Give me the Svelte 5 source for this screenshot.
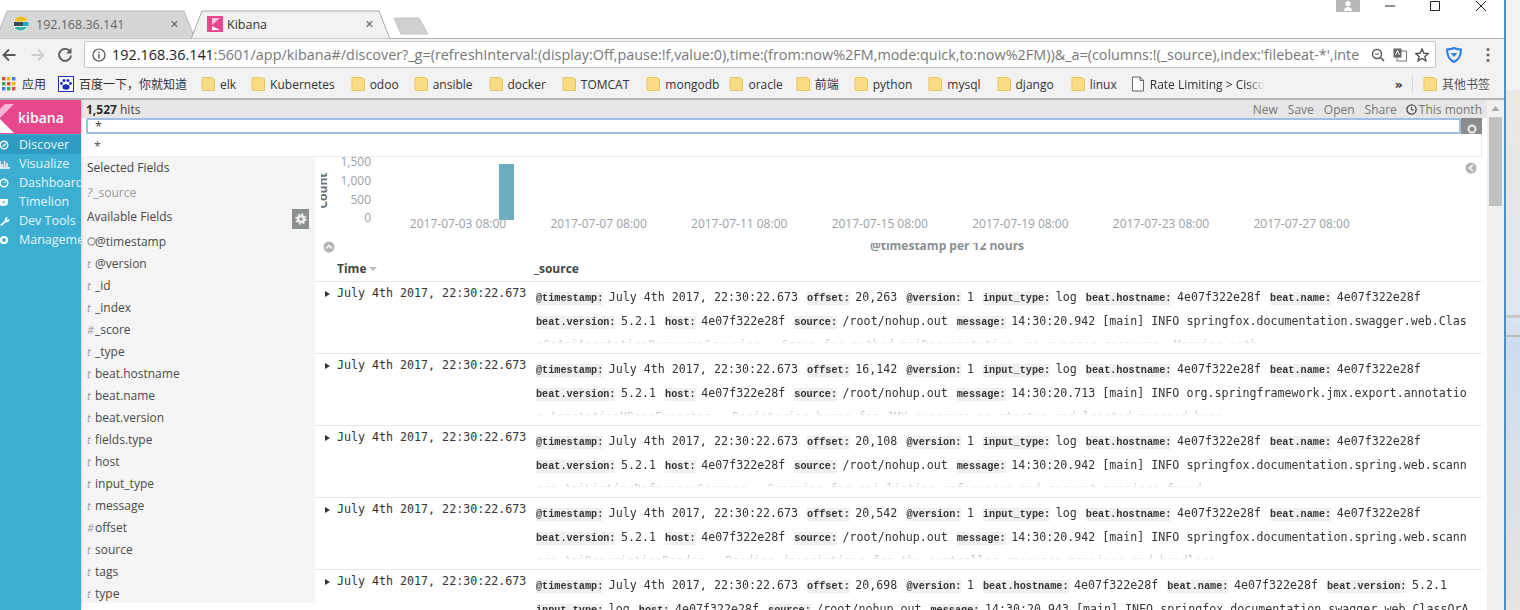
<script>
  const bookmarks = [
    { name: "elk", gap: 15 },
    { name: "Kubernetes", gap: 16 },
    { name: "odoo", gap: 15 },
    { name: "ansible", gap: 16 },
    { name: "docker", gap: 16 },
    { name: "TOMCAT", gap: 17 },
    { name: "mongodb", gap: 10 },
    { name: "oracle", gap: 13 },
    { name: "前端", gap: 15 },
    { name: "python", gap: 16 },
    { name: "mysql", gap: 16 },
    { name: "django", gap: 17 },
    { name: "linux", gap: 14 }
  ]

  const navItems = [
    { name: "Discover", active: true, icon: "compass" },
    { name: "Visualize", icon: "bars" },
    { name: "Dashboard", icon: "gauge" },
    { name: "Timelion", icon: "mask" },
    { name: "Dev Tools", icon: "wrench" },
    { name: "Management", icon: "gear" }
  ]

  const fields = [
    ["clock", "@timestamp"], ["t", "@version"], ["t", "_id"], ["t", "_index"],
    ["#", "_score"], ["t", "_type"], ["t", "beat.hostname"], ["t", "beat.name"],
    ["t", "beat.version"], ["t", "fields.type"], ["t", "host"], ["t", "input_type"],
    ["t", "message"], ["#", "offset"], ["t", "source"], ["t", "tags"], ["t", "type"]
  ]

  const ts = "July 4th 2017, 22:30:22.673"
  const host = "4e07f322e28f"
  const rows = [
    { offset: "20,263", msg: "14:30:20.942 [main] INFO springfox.documentation.swagger.web.ClassOrApiAnnotationResourceGrouping - Group for method apiDocumentation was swagger resource, Mapping path" },
    { offset: "16,142", msg: "14:30:20.713 [main] INFO org.springframework.jmx.export.annotation.AnnotationMBeanExporter - Registering beans for JMX exposure on startup and located managed bean" },
    { offset: "20,108", msg: "14:30:20.942 [main] INFO springfox.documentation.spring.web.scanners.ApiListingReferenceScanner - Scanning for api listing references and request mappings found" },
    { offset: "20,542", msg: "14:30:20.942 [main] INFO springfox.documentation.spring.web.scanners.ApiDescriptionReader - Reading descriptions for the controller resource mappings and handlers" }
  ]
  const lastMsg = "14:30:20.943 [main] INFO springfox.documentation.swagger.web.ClassOrApiAnnotationResourceGrouping"

  const yTicks = [["1,500", 166], ["1,000", 185], ["500", 204], ["0", 222]]
  const xTicks = ["2017-07-03 08:00", "2017-07-07 08:00", "2017-07-11 08:00", "2017-07-15 08:00", "2017-07-19 08:00", "2017-07-23 08:00", "2017-07-27 08:00"]
</script>

<div class="screen">
  <div class="window">
    <div class="tabstrip">
      <div class="tab">
        <svg class="tab-bg" viewBox="0 0 205 29" preserveAspectRatio="none"><path d="M0 29 L11 1 L188 1 L199 29 Z" fill="#d6d6d6" stroke="#b9b9b9"/></svg>
        <svg class="favicon" viewBox="0 0 16 16">
          <circle cx="8" cy="8" r="7.500" fill="#f1f1f1"/>
          <path d="M2 3.500A7.500 7.500 0 0 1 14 3.500L14 5.500H2Z" fill="#f0bf1a"/>
          <path d="M1 6H15V10H1Z" fill="#3a4a5a"/>
          <path d="M2 11H14A7.500 7.500 0 0 1 2 12Z" fill="#30b5a8"/>
          <path d="M10 6H15.500V10H10Z" fill="#22a7d0"/>
        </svg>
        <span class="tab-title dim">192.168.36.141</span>
        <span class="tab-x">✕</span>
      </div>
      <div class="tab active">
        <svg class="tab-bg" viewBox="0 0 205 29" preserveAspectRatio="none"><path d="M0 29 L11 1 L188 1 L199 29 Z" fill="#f2f2f2" stroke="#a9a9a9"/></svg>
        <svg class="favicon" viewBox="0 0 16 16">
          <rect width="16" height="16" fill="#e8488b"/>
          <path d="M5 2H13L5 9Z" fill="#f9c5dc"/>
          <path d="M5 10L13 14H5Z" fill="#fff"/>
        </svg>
        <span class="tab-title">Kibana</span>
        <span class="tab-x">✕</span>
      </div>
      <svg class="newtab" viewBox="0 0 36 18"><path d="M1 1H26L35 17H8Z" fill="#d0d0d0" stroke="#c4c4c4"/></svg>
      <div class="spring"></div>
      <div class="winbtns">
        <span class="profile"><svg viewBox="0 0 24 12"><path d="M8 11C8 8 10 7 12 7S16 8 16 11Z M12 1a2.600 2.600 0 1 1 0 5.200a2.600 2.600 0 1 1 0-5.200Z" fill="#fff"/></svg></span>
        <svg class="winbtn w-min" viewBox="0 0 10 10"><path d="M0 5H10" stroke="#222"/></svg>
        <svg class="winbtn w-max" viewBox="0 0 10 10"><path d="M.5.5H9.500V9.500H.5Z" fill="none" stroke="#222"/></svg>
        <svg class="winbtn w-close" viewBox="0 0 10 10"><path d="M0 0L10 10M10 0L0 10" stroke="#222"/></svg>
      </div>
    </div>

    <div class="toolbar">
      <svg class="tool" viewBox="0 0 16 16"><path d="M14.500 8H2.500M8 2.500L2.500 8L8 13.500" fill="none" stroke="#5a5a5a" stroke-width="1.800"/></svg>
      <svg class="tool fwd" viewBox="0 0 16 16"><path d="M1.500 8H13.500M8 2.500L13.500 8L8 13.500" fill="none" stroke="#cfcfcf" stroke-width="1.800"/></svg>
      <svg class="tool reload" viewBox="0 0 16 16"><path d="M13.300 5A6 6 0 1 0 14 8.500" fill="none" stroke="#5a5a5a" stroke-width="1.900"/><path d="M14.500 1V6.500H9Z" fill="#5a5a5a"/></svg>
      <div class="omnibox">
        <svg class="info" viewBox="0 0 14 14"><circle cx="7" cy="7" r="6" fill="none" stroke="#555" stroke-width="1.200"/><path d="M7 6V10.500M7 3.500V5" stroke="#555" stroke-width="1.400"/></svg>
        <span class="url"><b>192.168.36.141</b>:5601/app/kibana#/discover?_g=(refreshInterval:(display:Off,pause:!f,value:0),time:(from:now%2FM,mode:quick,to:now%2FM))&amp;_a=(columns:!(_source),index:'filebeat-*',inte</span>
        <svg class="omni-ic" viewBox="0 0 14 14"><circle cx="6" cy="6" r="4.500" fill="none" stroke="#555" stroke-width="1.400"/><path d="M9.500 9.500L13 13" stroke="#555" stroke-width="1.600"/><path d="M4 6H8" stroke="#555"/></svg>
        <svg class="omni-ic" viewBox="0 0 14 14"><rect x="4" y="3" width="9.500" height="10" fill="#fff" stroke="#777"/><rect x=".5" y=".5" width="8" height="9" fill="#666"/><path d="M2.500 7L4.500 2.500L6.500 7" fill="none" stroke="#fff"/></svg>
        <svg class="omni-ic" viewBox="0 0 14 14"><path d="M7 1L8.800 5.100L13.300 5.500L9.900 8.400L10.900 12.800L7 10.500L3.100 12.800L4.100 8.400L.7 5.500L5.200 5.100Z" fill="none" stroke="#444" stroke-width="1.300"/></svg>
      </div>
      <svg class="shield" viewBox="0 0 16 16"><path d="M8 1C10 2 12 2.500 15 2.500C15 9 12 13 8 15C4 13 1 9 1 2.500C4 2.500 6 2 8 1Z" fill="none" stroke="#2f7fe8" stroke-width="2"/><path d="M4.500 6H11.500L8 10Z" fill="#2f7fe8"/></svg>
      <svg class="dots" viewBox="0 0 4 16"><circle cx="2" cy="2.500" r="1.600" fill="#666"/><circle cx="2" cy="8" r="1.600" fill="#666"/><circle cx="2" cy="13.500" r="1.600" fill="#666"/></svg>
    </div>

    <div class="bookmarks">
      <svg class="apps" viewBox="0 0 14 14">
        {#each [0, 5, 10] as y, j}
          {#each [0, 5, 10] as x, i}
            <rect x={x} y={y} width="3.400" height="3.400" fill={["#d9493b", "#f0b400", "#3b7de0", "#37a853", "#d9493b", "#f0b400", "#3b7de0", "#37a853", "#d9493b"][j * 3 + i]}/>
          {/each}
        {/each}
      </svg>
      <span class="bm-text apps-text">应用</span>
      <svg class="paw" viewBox="0 0 16 16"><rect x=".5" y=".5" width="15" height="15" fill="#fff" stroke="#1e2fb5"/><ellipse cx="8" cy="11" rx="3.600" ry="2.800" fill="#1e2fb5"/><circle cx="3.500" cy="7.500" r="1.400" fill="#1e2fb5"/><circle cx="12.500" cy="7.500" r="1.400" fill="#1e2fb5"/><circle cx="6" cy="4.500" r="1.500" fill="#1e2fb5"/><circle cx="10" cy="4.500" r="1.500" fill="#1e2fb5"/></svg>
      <span class="bm-text baidu">百度一下，你就知道</span>
      {#each bookmarks as b}
        <span class="bm" style="margin-right: {b.gap}px">
          <svg class="folder" viewBox="0 0 14 16"><path d="M1 1.500H10L13.500 3V14.500H1Z" fill="#fbdc83" stroke="#e8c465"/></svg>
          <span class="bm-text">{b.name}</span>
        </span>
      {/each}
      <span class="bm rate">
        <svg class="folder" viewBox="0 0 14 16"><path d="M1.500 1H9L12.500 4.500V15H1.500ZM9 1V4.500H12.500" fill="#fff" stroke="#666"/></svg>
        <span class="bm-text rate-text">Rate Limiting &gt; Cisco</span>
      </span>
      <span class="spring"></span>
      <span class="more">»</span>
      <span class="bm-sep"></span>
      <svg class="folder" viewBox="0 0 14 16"><path d="M1 1.500H10L13.500 3V14.500H1Z" fill="#fbdc83" stroke="#e8c465"/></svg>
      <span class="bm-text other">其他书签</span>
    </div>

    <div class="page">
      <nav class="nav">
        <div class="logo">
          <svg viewBox="0 0 16 34"><path d="M0 9L5 4H14L0 18Z" fill="#f6b6d1"/><path d="M0 19L14 33H0Z" fill="#fff"/></svg>
          <span>kibana</span>
        </div>
        {#each navItems as item}
          <div class="nav-item" class:active={item.active}>
            <svg viewBox="0 0 12 12">
              {#if item.icon === "compass"}
                <circle cx="4" cy="6" r="3.800" fill="none" stroke="#fff" stroke-width="1.400"/><path d="M2.500 7.500L6 4.500" stroke="#fff" stroke-width="1.400"/>
              {:else if item.icon === "bars"}
                <path d="M0 3V10H9V9M2 9V6M4.500 9V3M7 9V5" fill="none" stroke="#fff" stroke-width="1.500"/>
              {:else if item.icon === "gauge"}
                <circle cx="4" cy="6" r="3.800" fill="none" stroke="#fff" stroke-width="1.400"/><path d="M4 6L6 4.500" stroke="#fff"/>
              {:else if item.icon === "mask"}
                <path d="M-1 3H8V7C8 9 6 10 3.500 10S-1 9-1 7Z" fill="#fff"/><circle cx="3.500" cy="6" r="1" fill="#3caed2"/>
              {:else if item.icon === "wrench"}
                <path d="M0 10L5 5.500A2.600 2.600 0 0 1 8 2L6.500 3.700L8 5L9.500 3.500A2.800 2.800 0 0 1 6 7L1.500 11Z" fill="#fff"/>
              {:else}
                <circle cx="4" cy="6" r="3" fill="none" stroke="#fff" stroke-width="2.200"/>
              {/if}
            </svg>
            <span>{item.name}</span>
          </div>
        {/each}
      </nav>

      <div class="main">
        <div class="topbar">
          <span class="hits"><b>1,527</b> hits</span>
          <span class="spring"></span>
          <span>New</span><span>Save</span><span>Open</span><span>Share</span>
          <span class="month">
            <svg viewBox="0 0 10 10"><circle cx="5" cy="5" r="4.200" fill="none" stroke="#555" stroke-width="1.300"/><path d="M5 2.500V5.300H7" fill="none" stroke="#555"/></svg>
            This month
          </span>
        </div>
        <div class="searchrow">
          <div class="searchinput">*</div>
          <div class="searchbtn"><svg viewBox="0 0 12 12"><circle cx="6" cy="7" r="3.500" fill="none" stroke="#eee" stroke-width="2"/></svg></div>
        </div>
        <div class="suggest"><span>*</span></div>

        <div class="content">
          <aside class="fields">
            <div class="side-head">Selected Fields</div>
            <div class="side-source"><i>?</i> _source</div>
            <div class="side-avail">
              <span>Available Fields</span>
              <span class="cog"><svg viewBox="0 0 12 12"><circle cx="6" cy="6" r="3" fill="none" stroke="#f2f2f2" stroke-width="2.600"/><circle cx="6" cy="6" r="5" fill="none" stroke="#f2f2f2" stroke-width="1.400" stroke-dasharray="2 1.900"/></svg></span>
            </div>
            <div class="field-list">
              {#each fields as [type, name]}
                <div class="field">
                  {#if type === "clock"}
                    <svg class="fclock" viewBox="0 0 10 10"><circle cx="5" cy="5" r="4" fill="none" stroke="#888" stroke-width="1.200"/></svg>
                  {:else}
                    <span class="ftype">{type}</span>
                  {/if}
                  <span>{name}</span>
                </div>
              {/each}
            </div>
          </aside>

          <section class="results">
            <svg class="chart" viewBox="315 157 1167 101" width="1167" height="101">
              <defs>
                <clipPath id="count-clip"><rect x="321" y="157" width="20" height="70"/></clipPath>
                <clipPath id="title-clip"><rect x="800" y="243" width="300" height="12"/></clipPath>
              </defs>
              <g clip-path="url(#count-clip)">
                <text class="axis-title count" transform="translate(327 190.500) rotate(-90)" text-anchor="middle">Count</text>
              </g>
              {#each yTicks as [label, y]}
                <text class="tick" x="371" y={y} text-anchor="end">{label}</text>
              {/each}
              <rect x="499" y="164" width="15" height="56" fill="#6eadc1"/>
              {#each xTicks as label, i}
                <text class="tick" x={458 + i * 140.6} y="228" text-anchor="middle">{label}</text>
              {/each}
              <g clip-path="url(#title-clip)">
                <text class="axis-title" x="947" y="249.500" text-anchor="middle">@timestamp per 12 hours</text>
              </g>
              <circle cx="1471" cy="168" r="5.500" fill="#b4b4b4"/>
              <path d="M1473 165L1469.500 168L1473 171" fill="none" stroke="#fff" stroke-width="1.500"/>
              <circle cx="329" cy="247" r="5.500" fill="#b4b4b4"/>
              <path d="M326 248.500L329 245.500L332 248.500" fill="none" stroke="#fff" stroke-width="1.500"/>
            </svg>

            <div class="thead">
              <span class="th-time">Time <i class="caret"></i></span>
              <span class="th-source">_source</span>
            </div>

            {#each rows as row}
              <div class="row">
                <span class="arrow"></span>
                <span class="time">{ts}</span>
                <div class="source">
                  <b>@timestamp:</b> <span>{ts}</span>
                  <b>offset:</b> <span>{row.offset}</span>
                  <b>@version:</b> <span>1</span>
                  <b>input_type:</b> <span>log</span>
                  <b>beat.hostname:</b> <span>{host}</span>
                  <b>beat.name:</b> <span>{host}</span>
                  <b>beat.version:</b> <span>5.2.1</span>
                  <b>host:</b> <span>{host}</span>
                  <b>source:</b> <span>/root/nohup.out</span>
                  <b>message:</b> <span class="msg">{row.msg}</span>
                </div>
              </div>
            {/each}
            <div class="row">
              <span class="arrow"></span>
              <span class="time">{ts}</span>
              <div class="source">
                <b>@timestamp:</b> <span>{ts}</span>
                <b>offset:</b> <span>20,698</span>
                <b>@version:</b> <span>1</span>
                <b>beat.hostname:</b> <span>{host}</span>
                <b>beat.name:</b> <span>{host}</span>
                <b>beat.version:</b> <span>5.2.1</span>
                <b>input_type:</b> <span>log</span>
                <b>host:</b> <span>{host}</span>
                <b>source:</b> <span>/root/nohup.out</span>
                <b>message:</b> <span class="msg">{lastMsg}</span>
              </div>
            </div>
          </section>
        </div>
      </div>

      <div class="scrollbar">
        <svg viewBox="0 0 10 6"><path d="M5 0L10 6H0Z" fill="#a8a8a8"/></svg>
        <div class="thumb"></div>
      </div>
    </div>
  </div>
  <div class="desktop"></div>
</div>

<style>
  :global(body) {
    margin: 0;
    background: #fff;
  }
  .screen {
    display: flex;
    width: 1520px;
    height: 610px;
    overflow: hidden;
    font-family: "Open Sans", "Noto Sans CJK SC", sans-serif;
  }
  .window {
    width: 1504px;
    display: flex;
    flex-direction: column;
    flex: none;
  }
  .desktop {
    flex: 1;
    border-left: 2px solid #4f8fc9;
    background: linear-gradient(180deg, #f2f2f2 0, #f2f2f2 90px, #ece6e0 90px, #dfe7ef 315px, #c9c9c9 315px, #c9c9c9 318px, #dbe5ef 318px, #d5dfe9 335px, #bdbdbd 335px, #bdbdbd 337px, #cdddee 337px, #e8e4df 100%);
  }
  .spring {
    flex: 1;
  }

  .tabstrip {
    height: 38px;
    display: flex;
    align-items: flex-end;
    background: #fff;
    flex: none;
  }
  .tab {
    position: relative;
    width: 195px;
    height: 28px;
    display: flex;
    align-items: center;
    padding: 0 14px 0 13px;
    box-sizing: border-box;
    flex: none;
    color: #333;
  }
  .tab-bg {
    position: absolute;
    left: -4px;
    top: 0;
    width: 205px;
    height: 29px;
  }
  .tab.active {
    z-index: 1;
    padding-left: 12px;
  }
  .favicon {
    position: relative;
    width: 16px;
    height: 16px;
    margin-right: 7px;
    flex: none;
  }
  .tab.active .favicon {
    margin-right: 4px;
  }
  .tab-title {
    position: relative;
    flex: 1;
    font-size: 12.5px;
  }
  .dim {
    color: #666;
  }
  .tab-x {
    position: relative;
    font-size: 11px;
    color: #666;
    font-family: "DejaVu Sans", sans-serif;
    margin-right: 2px;
  }
  .newtab {
    width: 36px;
    height: 18px;
    margin: 0 0 3px 3px;
  }
  .winbtns {
    align-self: flex-start;
    display: flex;
    align-items: center;
    height: 12px;
  }
  .profile {
    width: 24px;
    height: 12px;
    background: #b8b8b8;
    margin-right: 25px;
  }
  .profile svg {
    display: block;
  }
  .winbtn {
    width: 10px;
    height: 10px;
  }
  .w-max {
    margin-left: 35px;
  }
  .w-close {
    margin: 0 18px 0 36px;
  }

  .toolbar {
    height: 32px;
    background: #f2f2f2;
    border-top: 1px solid #b4b4b4;
    box-sizing: border-box;
    display: flex;
    align-items: center;
    flex: none;
  }
  .tool {
    width: 16px;
    height: 16px;
    margin-left: 1px;
    flex: none;
  }
  .fwd {
    margin-left: 13px;
  }
  .reload {
    margin-left: 11px;
  }
  .omnibox {
    width: 1352px;
    height: 27px;
    margin-left: 11px;
    background: #fff;
    border: 1px solid #c6c6c6;
    border-radius: 2px;
    box-sizing: border-box;
    display: flex;
    align-items: center;
    padding-left: 7px;
    gap: 8px;
    flex: none;
  }
  .info {
    width: 14px;
    height: 14px;
    flex: none;
    margin-right: -2px;
  }
  .url {
    width: 1251px;
    overflow: hidden;
    white-space: nowrap;
    font-size: 14.4px;
    color: #777;
    flex: none;
  }
  .url b {
    font-weight: 400;
    color: #222;
  }
  .omni-ic {
    width: 14px;
    height: 14px;
    flex: none;
  }
  .shield {
    width: 16px;
    height: 16px;
    margin-left: 10px;
    flex: none;
  }
  .dots {
    width: 4px;
    height: 16px;
    margin-left: 24px;
    flex: none;
  }

  .bookmarks {
    height: 30px;
    background: #f2f2f2;
    border-bottom: 2px solid #b5b5b5;
    box-sizing: border-box;
    display: flex;
    align-items: center;
    padding-left: 2px;
    flex: none;
    font-size: 12px;
    color: #333;
  }
  .apps {
    width: 14px;
    height: 14px;
    flex: none;
  }
  .apps-text {
    margin-left: 6px;
  }
  .paw {
    width: 16px;
    height: 16px;
    margin-left: 12px;
    flex: none;
  }
  .baidu {
    margin-left: 5px;
    margin-right: 14px;
  }
  .bm {
    display: flex;
    align-items: center;
  }
  .folder {
    width: 14px;
    height: 16px;
    flex: none;
    margin-right: 5px;
  }
  .bm-text {
    white-space: nowrap;
  }
  .rate-text {
    width: 115px;
    overflow: hidden;
    -webkit-mask-image: linear-gradient(90deg, #000 85%, transparent);
    mask-image: linear-gradient(90deg, #000 85%, transparent);
  }
  .more {
    font-family: "DejaVu Sans", sans-serif;
    font-size: 13px;
    font-weight: 700;
    margin-right: 9px;
  }
  .bm-sep {
    width: 1px;
    height: 16px;
    background: #d8d8d8;
    margin-right: 10px;
  }
  .other {
    margin-right: 14px;
    color: #555;
  }

  .page {
    flex: 1;
    min-height: 0;
    display: flex;
  }
  .nav {
    width: 81px;
    flex: none;
    background: #3caed2;
    overflow: hidden;
    box-shadow: 1px 0 2px rgba(0, 0, 0, .15);
    z-index: 1;
  }
  .logo {
    height: 34px;
    background: #e8488b;
    display: flex;
    align-items: center;
    color: #fff;
    font-size: 14px;
    font-weight: 600;
    margin-bottom: 1px;
  }
  .logo svg {
    width: 16px;
    height: 34px;
    margin-right: 2px;
    flex: none;
  }
  .nav-item {
    height: 19px;
    display: flex;
    align-items: center;
    color: #e4f6fc;
    font-size: 12.5px;
    white-space: nowrap;
  }
  .nav-item svg {
    width: 12px;
    height: 12px;
    flex: none;
    margin-right: 7px;
  }
  .nav-item.active {
    background: #2d9cc3;
  }

  .main {
    flex: 1;
    min-width: 0;
    display: flex;
    flex-direction: column;
    padding-right: 5px;
  }
  .topbar {
    height: 18px;
    background: #e6e6e6;
    margin-right: -5px;
    padding: 0 5px;
    display: flex;
    align-items: center;
    gap: 10px;
    font-size: 12px;
    color: #777;
    flex: none;
  }
  .hits {
    color: #444;
    font-size: 12px;
  }
  .hits b {
    font-weight: 700;
    color: #2d2d2d;
  }
  .month {
    display: flex;
    align-items: center;
    gap: 2px;
    margin-left: -1px;
  }
  .month svg {
    width: 11px;
    height: 11px;
  }
  .searchrow {
    display: flex;
    height: 16px;
    margin-left: 5px;
    background: #e6e6e6;
    flex: none;
    overflow: hidden;
  }
  .searchinput {
    flex: 1;
    background: #fff;
    border: 2px solid #9fbfe6;
    border-radius: 2px;
    box-sizing: border-box;
    padding-left: 7px;
    font-size: 12.5px;
    line-height: 14px;
    color: #444;
  }
  .searchbtn {
    width: 21px;
    background: #8c8c8c;
    flex: none;
    display: flex;
    justify-content: center;
  }
  .searchbtn svg {
    width: 12px;
    height: 12px;
    margin-top: 4px;
  }
  .suggest {
    height: 23px;
    margin-left: 5px;
    background: #fff;
    border-right: 1px solid #e8e8e8;
    border-bottom: 1px solid #ececec;
    box-sizing: border-box;
    padding: 4px 0 0 8px;
    font-size: 12.5px;
    color: #555;
    flex: none;
  }
  .content {
    flex: 1;
    min-height: 0;
    display: flex;
  }
  .fields {
    width: 234px;
    height: 446px;
    flex: none;
    background: #f5f5f5;
    padding-left: 6px;
    box-sizing: border-box;
    font-size: 12px;
    color: #444;
  }
  .side-head {
    height: 23px;
    line-height: 22px;
  }
  .side-source {
    height: 25px;
    line-height: 26px;
    color: #999;
  }
  .side-source i {
    margin-right: -2px;
  }
  .side-avail {
    height: 22px;
    display: flex;
    align-items: center;
    justify-content: space-between;
    padding-right: 6px;
  }
  .cog {
    width: 17px;
    height: 20px;
    background: #8c9090;
    display: flex;
    align-items: center;
    justify-content: center;
    margin-top: 6px;
  }
  .cog svg {
    width: 12px;
    height: 12px;
  }
  .field-list {
    margin-top: 3px;
  }
  .field {
    height: 22px;
    display: flex;
    align-items: center;
    font-size: 12px;
    color: #4a4a4a;
  }
  .ftype {
    width: 8px;
    color: #999;
    font-style: italic;
    flex: none;
    font-size: 11px;
  }
  .fclock {
    width: 9px;
    height: 9px;
    flex: none;
    margin-right: -1px;
  }
  .results {
    flex: 1;
    min-width: 0;
    overflow: hidden;
    background: #fff;
  }
  .chart {
    display: block;
  }
  .tick {
    font-family: "Open Sans", sans-serif;
    font-size: 12px;
    fill: #9aa1a5;
  }
  .axis-title {
    font-family: "Open Sans", sans-serif;
    font-size: 12px;
    font-weight: 700;
    fill: #8a8f92;
  }
  .count {
    fill: #6b7075;
  }
  .thead {
    height: 22px;
    padding-bottom: 2px;
    margin-top: -1px;
    padding-left: 22px;
    background: #fff;
    position: relative;
    display: flex;
    align-items: center;
    font-size: 12px;
    font-weight: 700;
    color: #3f4548;
    border-bottom: 1px solid #e8e8e8;
  }
  .th-time {
    width: 197px;
    flex: none;
  }
  .caret {
    display: inline-block;
    width: 0;
    height: 0;
    border: 4px solid transparent;
    border-top: 4px solid #bbb;
    border-bottom: 0;
    margin-left: -1px;
    vertical-align: middle;
  }
  .row {
    height: 71px;
    display: flex;
    border-bottom: 1px solid #e8e8e8;
    overflow: hidden;
    font-family: "DejaVu Sans Mono", monospace;
    font-size: 11.65px;
    color: #333;
  }
  .arrow {
    width: 0;
    height: 0;
    border-left: 5px solid #333;
    border-top: 3.5px solid transparent;
    border-bottom: 3.5px solid transparent;
    margin: 9px 7px 0 10px;
    flex: none;
  }
  .time {
    width: 199px;
    flex: none;
    line-height: 22px;
    white-space: nowrap;
  }
  .source {
    width: 933px;
    height: 62px;
    overflow: hidden;
    line-height: 24px;
    padding-top: 3px;
    box-sizing: border-box;
    -webkit-mask-image: linear-gradient(180deg, #000 48px, rgba(0, 0, 0, .45) 56px, transparent 62px);
    mask-image: linear-gradient(180deg, #000 48px, rgba(0, 0, 0, .45) 56px, transparent 62px);
    word-spacing: -1.5px;
  }
  .source b {
    font-family: "Liberation Mono", monospace;
    font-size: 10.2px;
    font-weight: 700;
    line-height: 1;
    background: #f0f0f0;
    padding: 1px 0;
    white-space: nowrap;
  }
  .source span {
    white-space: nowrap;
    margin-right: 3.5px;
    word-spacing: 0;
  }
  .source .msg {
    white-space: normal;
    word-break: break-all;
    margin-right: 0;
  }
  .scrollbar {
    width: 17px;
    flex: none;
    background: #f1f1f1;
    display: flex;
    flex-direction: column;
    align-items: center;
  }
  .scrollbar svg {
    width: 9px;
    height: 5px;
    margin: 6px 0 6px;
  }
  .thumb {
    width: 13px;
    height: 89px;
    background: #c1c1c1;
  }
</style>
